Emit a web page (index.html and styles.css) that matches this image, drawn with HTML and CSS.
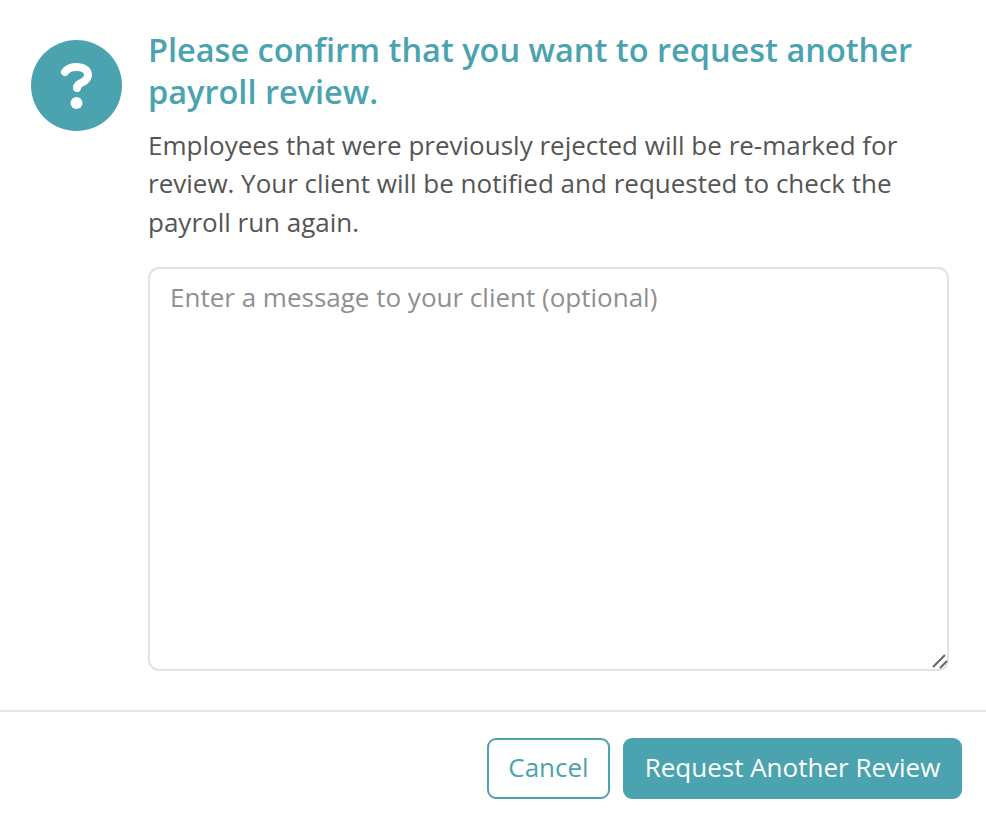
FILE: index.html
```html
<!DOCTYPE html>
<html lang="en">
<head>
<meta charset="utf-8">
<title>Request another review</title>
<link rel="stylesheet" href="styles.css">
</head>
<body>
<div class="dialog">
  <div class="content">
    <svg class="icon" viewBox="0 0 91 91" aria-hidden="true">
      <circle cx="45.5" cy="45.5" r="45.5" fill="#4ba3b0"/>
      <path d="M34 32C36.500 28.500 40 27 45 27C52 27 57 30 57 35C57 39 54 41 51 42.500C48 44 46 45 46 48" fill="none" stroke="#fff" stroke-width="8" stroke-linecap="round" stroke-linejoin="round"/>
      <circle cx="45.500" cy="63" r="6" fill="#fff"/>
    </svg>
    <div class="main">
      <h1 class="title">Please confirm that you want to request another payroll review.</h1>
      <p class="text">Employees that were previously rejected will be re-marked for review. Your client will be notified and requested to check the payroll run again.</p>
      <div class="field">
        <textarea class="message" placeholder="Enter a message to your client (optional)"></textarea>
        <svg class="grip" viewBox="0 0 16 16" aria-hidden="true">
          <path d="M1 14L13 2M8 15L15 8" fill="none" stroke="#666" stroke-width="2"/>
        </svg>
      </div>
    </div>
  </div>
  <div class="footer">
    <button class="btn btn-outline" type="button">Cancel</button>
    <button class="btn btn-solid" type="button">Request Another Review</button>
  </div>
</div>
</body>
</html>
```

FILE: styles.css
```css
* { box-sizing: border-box; }
html, body { margin: 0; padding: 0; background: #fff; }
body { font-family: "Open Sans", "Liberation Sans", sans-serif; color: #555; }
.dialog { width: 986px; height: 820px; display: flex; flex-direction: column; }
.content { display: flex; align-items: flex-start; padding: 29px 37px 0 31px; height: 710px; }
.icon { width: 91px; height: 91px; flex: none; margin: 11px 26px 0 0; }
.main { flex: 1; min-width: 0; }
.title { margin: 0; font-size: 32.500px; line-height: 42px; font-weight: 600; color: #4ba3b0; }
.text { margin: 12.800px 0 0; font-size: 26px; line-height: 38.500px; color: #555; }
.field { position: relative; margin-top: 25.700px; width: 801px; height: 404px; }
.message { display: block; width: 100%; height: 100%; padding: 11px 20px; border: 2px solid #dfe3e6; border-radius: 11px; font: 26px/34px "Open Sans", "Liberation Sans", sans-serif; color: #555; outline: none; resize: none; }
.message::placeholder { color: #8f8f8f; opacity: 1; }
.grip { position: absolute; right: 1px; bottom: 2px; width: 16px; height: 16px; pointer-events: none; }
.footer { border-top: 2px solid #e3e5e7; display: flex; justify-content: flex-end; gap: 13px; padding: 26px 24px 0 0; flex: 1; align-items: flex-start; }
.btn { height: 61px; border-radius: 9px; font: 26px/1 "Open Sans", "Liberation Sans", sans-serif; padding: 0 0 4px; }
.btn-outline { width: 123px; background: #fff; border: 2px solid #4ba3b0; color: #4ba3b0; }
.btn-solid { width: 339px; background: #4ba3b0; border: 2px solid #4ba3b0; color: #fff; }
```
